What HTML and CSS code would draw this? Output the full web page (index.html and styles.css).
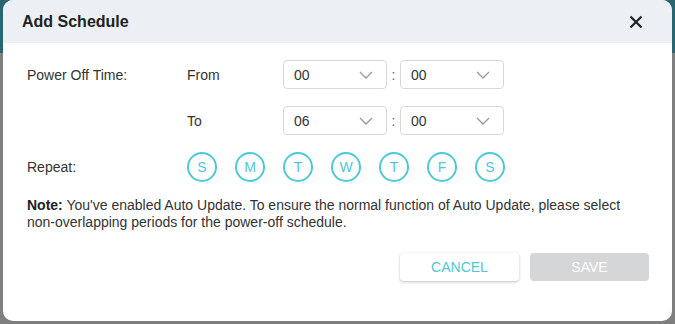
FILE: index.html
```html
<!DOCTYPE html>
<html>
<head>
<meta charset="utf-8">
<link rel="stylesheet" href="styles.css">
</head>
<body>
<div class="backdrop">
  <div class="dialog">
    <div class="header">
      <span class="title">Add Schedule</span>
      <svg class="close" width="14" height="14" viewBox="0 0 14 14"><path d="M1.5 1.5 L12.5 12.5 M12.5 1.5 L1.5 12.5" stroke="#222" stroke-width="2.2" fill="none"/></svg>
    </div>
    <div class="body">
      <div class="row time-row">
        <div class="label">Power Off Time:</div>
        <div class="sub">From</div>
        <div class="select"><span>00</span><svg class="chev" width="14" height="8" viewBox="0 0 14 8"><path d="M1 1 L7 7 L13 1" stroke="#999" stroke-width="1.3" fill="none"/></svg></div>
        <div class="colon">:</div>
        <div class="select"><span>00</span><svg class="chev" width="14" height="8" viewBox="0 0 14 8"><path d="M1 1 L7 7 L13 1" stroke="#999" stroke-width="1.3" fill="none"/></svg></div>
      </div>
      <div class="row time-row">
        <div class="label"></div>
        <div class="sub">To</div>
        <div class="select"><span>06</span><svg class="chev" width="14" height="8" viewBox="0 0 14 8"><path d="M1 1 L7 7 L13 1" stroke="#999" stroke-width="1.3" fill="none"/></svg></div>
        <div class="colon">:</div>
        <div class="select"><span>00</span><svg class="chev" width="14" height="8" viewBox="0 0 14 8"><path d="M1 1 L7 7 L13 1" stroke="#999" stroke-width="1.3" fill="none"/></svg></div>
      </div>
      <div class="row repeat-row">
        <div class="label">Repeat:</div>
        <div class="days">
          <span class="day">S</span><span class="day">M</span><span class="day">T</span><span class="day">W</span><span class="day">T</span><span class="day">F</span><span class="day">S</span>
        </div>
      </div>
      <p class="note"><b>Note:</b> You've enabled Auto Update. To ensure the normal function of Auto Update, please select non-overlapping periods for the power-off schedule.</p>
      <div class="actions">
        <button class="btn cancel">CANCEL</button>
        <button class="btn save">SAVE</button>
      </div>
    </div>
  </div>
</div>
</body>
</html>
```

FILE: styles.css
```css
* { box-sizing: border-box; }
html, body { margin: 0; padding: 0; }
body {
  width: 675px;
  height: 324px;
  overflow: hidden;
  font-family: "Liberation Sans", Arial, sans-serif;
  background: linear-gradient(to bottom, #2b6570 0, #2b6570 53px, #7f7f7f 53px);
}
.backdrop {
  padding: 0 3px 3px 3px;
}
.dialog {
  width: 669px;
  height: 321px;
  background: #fff;
  border-radius: 10px;
  overflow: hidden;
}
.header {
  height: 43px;
  background: #ecf0f5;
  display: flex;
  align-items: center;
  justify-content: space-between;
  padding: 0 29px 0 19px;
}
.title {
  font-size: 16px;
  font-weight: bold;
  color: #222;
}
.close { display: block; }
.body {
  padding: 17px 0 0 24px;
}
.row {
  display: flex;
  align-items: center;
}
.time-row { height: 29px; margin-bottom: 17px; }
.label {
  width: 160px;
  font-size: 14px;
  color: #333;
}
.sub {
  width: 96px;
  font-size: 14px;
  color: #333;
}
.select {
  width: 104px;
  height: 29px;
  border: 1px solid #d9d9d9;
  border-radius: 4px;
  display: flex;
  align-items: center;
  justify-content: space-between;
  padding: 0 13px 0 10px;
  font-size: 14px;
  color: #333;
}
.chev { display: block; }
.colon {
  width: 13px;
  text-align: center;
  font-size: 14px;
  color: #666;
}
.repeat-row { height: 30px; margin-top: 2px; }
.days {
  display: flex;
  gap: 18px;
}
.day {
  width: 30px;
  height: 30px;
  border: 2px solid #4fc9d6;
  border-radius: 50%;
  display: flex;
  align-items: center;
  justify-content: center;
  font-size: 14px;
  color: #4fc9d6;
}
.note {
  margin: 15px 0 0 0;
  padding-right: 40px;
  font-size: 14px;
  line-height: 17px;
  color: #333;
}
.note b { color: #222; }
.actions {
  display: flex;
  justify-content: flex-end;
  gap: 11px;
  padding-right: 23px;
  margin-top: 22px;
}
.btn {
  width: 119px;
  height: 28px;
  border: none;
  border-radius: 4px;
  font-family: "Liberation Sans", Arial, sans-serif;
  font-size: 14px;
  padding: 0;
}
.cancel {
  background: #fff;
  color: #4fc9d6;
  box-shadow: 0 1px 3px rgba(0,0,0,0.25);
}
.save {
  background: #d5d6d8;
  color: #fff;
}
```
